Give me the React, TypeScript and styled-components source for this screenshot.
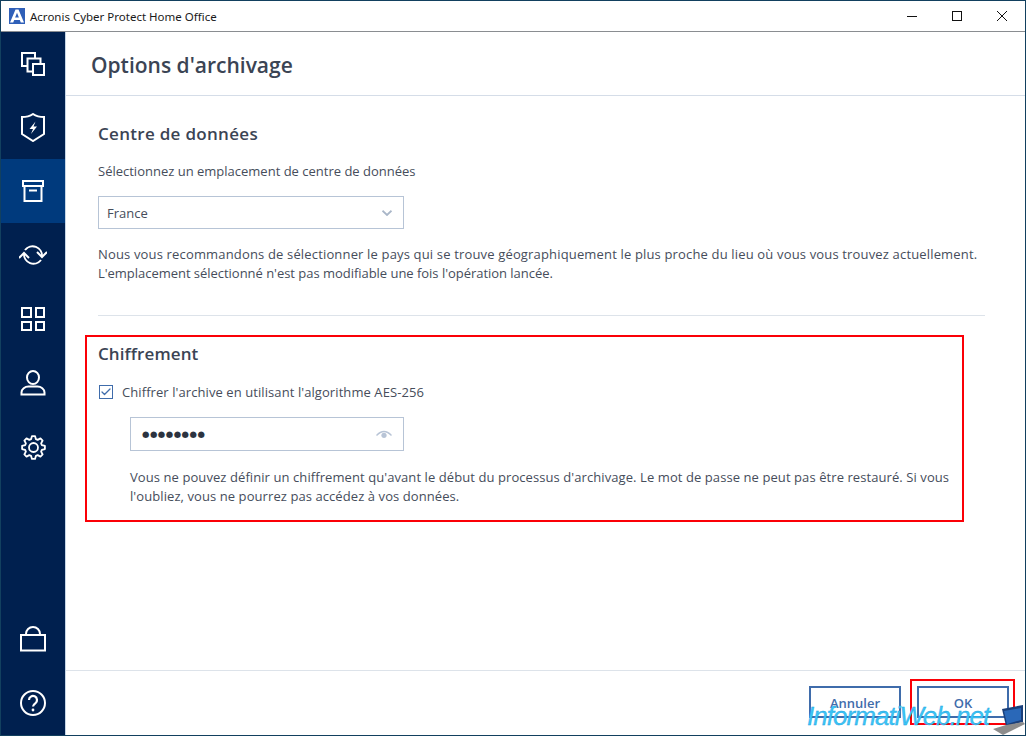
import React from 'react'
import styled, { createGlobalStyle } from 'styled-components'
import { Check } from 'lucide-react'

const GlobalStyle = createGlobalStyle`
  html, body {
    margin: 0;
    padding: 0;
    background: #fff;
  }
  * {
    box-sizing: border-box;
  }
`

const Window = styled.div`
  position: relative;
  width: 1026px;
  height: 736px;
  display: flex;
  flex-direction: column;
  border: 1px solid #12405f;
  background: #fff;
  font-family: 'Open Sans', 'Noto Sans', sans-serif;
  color: #3b4454;
  overflow: hidden;
`

const TitleBar = styled.div`
  height: 31px;
  flex: none;
  display: flex;
  align-items: center;
  border-bottom: 1px solid #8a8d91;
  padding-left: 8px;
`

const AppLogo = styled.svg`
  width: 16px;
  height: 16px;
  flex: none;
`

const TitleText = styled.div`
  margin-left: 5px;
  font-family: 'Noto Sans', 'Open Sans', sans-serif;
  font-size: 11.5px;
  color: #1a1a1a;
  flex: 1;
`

const WinButtons = styled.div`
  display: flex;
  align-items: center;
  margin-right: 1px;
`

const WinButton = styled.div`
  width: 45px;
  height: 30px;
  display: flex;
  align-items: center;
  justify-content: center;
`

const Main = styled.div`
  flex: 1;
  display: flex;
  min-height: 0;
`

const Sidebar = styled.nav`
  width: 65px;
  flex: none;
  background: #00204f;
  display: flex;
  flex-direction: column;
  border-right: 1px solid #c6d6e6;
`

const NavItem = styled.div<{ $active?: boolean }>`
  height: 64px;
  flex: none;
  display: flex;
  align-items: center;
  justify-content: center;
  background: ${(p) => (p.$active ? '#003a7d' : 'transparent')};
  color: #fff;

  &:nth-child(2) {
    height: 63px;
  }
`

const NavSpacer = styled.div`
  flex: 1;
`

const Content = styled.div`
  flex: 1;
  display: flex;
  flex-direction: column;
  min-width: 0;
`

const Header = styled.header`
  height: 64px;
  flex: none;
  display: flex;
  align-items: center;
  padding-left: 25px;
  border-bottom: 1px solid #d5dde8;
`

const PageTitle = styled.h1`
  margin: 2px 0 0;
  font-size: 21px;
  font-weight: 600;
  color: #3b4454;
`

const Body = styled.div`
  flex: 1;
  padding: 26px 40px 0 32px;
`

const SectionTitle = styled.h2`
  margin: 0;
  font-size: 17px;
  line-height: 24px;
  font-weight: 600;
  letter-spacing: 0.3px;
  color: #3b4454;
`

const Text = styled.p<{ $tracking?: number }>`
  margin: 0;
  font-size: 13px;
  line-height: 19px;
  letter-spacing: ${(p) => p.$tracking ?? 0.16}px;
  color: #464d5b;
`

const SelectLabel = styled(Text)`
  margin-top: 16px;
`

const Field = styled.div<{ $short?: boolean }>`
  width: ${(p) => (p.$short ? '274px' : '306px')};
  height: ${(p) => (p.$short ? '34px' : '33px')};
  display: flex;
  align-items: center;
  justify-content: space-between;
  border: 1px solid #b7c4d6;
  padding: 0 11px 0 8px;
  font-size: 13px;
  color: #464d5b;
`

const SelectField = styled(Field)`
  margin-top: 15px;
`

const Recommend = styled(Text)`
  margin-top: 16px;
`

const Divider = styled.hr`
  margin: 32px 0 0;
  border: 0;
  border-top: 1px solid #dde3ea;
`

const EncryptTitle = styled(SectionTitle)`
  margin-top: 26px;
  letter-spacing: 0.1px;
`

const CheckRow = styled.label`
  display: flex;
  align-items: center;
  margin-top: 16px;
  padding-left: 1px;
  height: 19px;
  font-size: 13px;
  letter-spacing: 0.08px;
  color: #464d5b;
`

const CheckBox = styled.span`
  width: 14px;
  height: 14px;
  flex: none;
  margin-right: 9px;
  border: 1px solid #3f6cab;
  display: flex;
  align-items: center;
  justify-content: center;
  color: #3f6cab;
`

const Indented = styled.div`
  padding-left: 32px;
`

const PasswordField = styled(Field)`
  margin-top: 16px;
  padding-left: 11px;
`

const Dots = styled.span`
  font-family: 'DejaVu Sans', sans-serif;
  font-size: 8.5px;
  letter-spacing: 0.5px;
  color: #2c3340;
`

const EncryptNote = styled(Text)`
  margin-top: 17px;
  width: 826px;
`

const Footer = styled.footer`
  height: 65px;
  flex: none;
  display: flex;
  justify-content: flex-end;
  gap: 16px;
  padding: 15px 16px 0 0;
  border-top: 1px solid #dde3ea;
`

const ActionButton = styled.button`
  width: 92px;
  height: 32px;
  padding: 2px 0 0;
  border: 2px solid #3f6cab;
  background: #fff;
  font-family: 'Open Sans', sans-serif;
  font-size: 13px;
  font-weight: 600;
  color: #3f6cab;
`

const Annotation = styled.div<{ $x: number; $y: number; $w: number; $h: number }>`
  position: absolute;
  left: ${(p) => p.$x}px;
  top: ${(p) => p.$y}px;
  width: ${(p) => p.$w}px;
  height: ${(p) => p.$h}px;
  border: 2px solid #fb0007;
  pointer-events: none;
`

const Watermark = styled.div`
  position: absolute;
  left: 806px;
  top: 700px;
  font-family: 'Liberation Sans', Arial, sans-serif;
  font-size: 26px;
  line-height: 30px;
  font-style: italic;
  color: #3cc4f5;
  -webkit-text-stroke: 0.3px #1c9fe0;
  letter-spacing: -0.95px;
  white-space: nowrap;
`

const Laptop = styled.svg`
  position: absolute;
  left: 992px;
  top: 704px;
  width: 32px;
  height: 30px;
`

const SecondLine = styled.span`
  letter-spacing: -0.03px;
`

const ICON = { fill: 'none', stroke: 'currentColor', strokeWidth: 2 }

// 8 rounded teeth, same outline as the settings icon of the sidebar
const gearPath = () => {
  const points: string[] = []
  const teeth = 8
  for (let i = 0; i < teeth; i++) {
    const step = (Math.PI * 2) / teeth
    const base = i * step - Math.PI / 2
    const at = (r: number, a: number) =>
      `${(12.5 + r * Math.cos(a)).toFixed(2)} ${(12.5 + r * Math.sin(a)).toFixed(2)}`
    points.push(at(8.7, base - step * 0.36))
    points.push(at(11.5, base - step * 0.17))
    points.push(at(11.5, base + step * 0.17))
    points.push(at(8.7, base + step * 0.36))
  }
  return `M${points.join('L')}Z`
}

const Icons = {
  copies: (
    <svg width='24' height='24' viewBox='0 0 24 24' {...ICON}>
      <rect x='1' y='1' width='13' height='13' />
      <rect x='6.500' y='6.500' width='13' height='13' fill='#00204f' />
      <rect x='12' y='12' width='11' height='11' fill='#00204f' />
    </svg>
  ),
  shield: (
    <svg width='24' height='29' viewBox='0 0 24 29' {...ICON}>
      <path d='M1 4c4 0 8-1 11-3 3 2 7 3 11 3v17l-11 7-11-7z' />
      <path d='M14.500 8.500L8.500 16H12l-2 5 6-7.500h-3.500z' fill='currentColor' stroke='none' />
    </svg>
  ),
  archive: (
    <svg width='22' height='22' viewBox='0 0 22 22' {...ICON}>
      <rect x='1' y='1' width='20' height='5' />
      <path d='M2.500 6V21H19.500V6' />
      <path d='M7 10.500h8' />
    </svg>
  ),
  sync: (
    <svg width='28' height='22' viewBox='0 0 28 22' {...ICON}>
      <path d='M6 6A9.500 9.500 0 0 1 23 12.500' />
      <path d='M22 16A9.500 9.500 0 0 1 5 9.500' />
      <path d='M18 8l5 5 5-5' />
      <path d='M0 14l5-5 5 5' />
    </svg>
  ),
  apps: (
    <svg width='24' height='24' viewBox='0 0 24 24' {...ICON}>
      <rect x='1' y='1' width='9' height='9' />
      <rect x='15' y='1' width='8' height='9' />
      <rect x='1' y='15' width='9' height='8' />
      <rect x='15' y='15' width='8' height='8' />
    </svg>
  ),
  user: (
    <svg width='26' height='26' viewBox='0 0 26 26' {...ICON}>
      <ellipse cx='13' cy='7.500' rx='6' ry='6.500' />
      <path d='M1.500 24.500v-2c0-3.500 3.500-6 7-6h9c3.500 0 7 2.500 7 6v2z' />
    </svg>
  ),
  gear: (
    <svg width='25' height='25' viewBox='0 0 25 25' fill='none' stroke='currentColor' strokeWidth='1.800' strokeLinejoin='round'>
      <path d={gearPath()} />
      <circle cx='12.500' cy='12.500' r='4.500' />
    </svg>
  ),
  bag: (
    <svg width='26' height='26' viewBox='0 0 26 26' {...ICON}>
      <rect x='1' y='9' width='24' height='15.500' />
      <path d='M6 9V8a7 7 0 0 1 14 0v1' />
    </svg>
  ),
  help: (
    <svg width='28' height='28' viewBox='0 0 28 28' {...ICON}>
      <circle cx='14' cy='14' r='12' />
      <path d='M10 11a4 4 0 1 1 6.500 3.100c-1.500 1.100-2.500 1.900-2.500 3.400' strokeWidth='2.200' />
      <circle cx='14' cy='21' r='1.400' fill='currentColor' stroke='none' />
    </svg>
  ),
}

const App: React.FC = () => {
  return (
    <Window>
      <GlobalStyle />
      <TitleBar>
        <AppLogo viewBox='0 0 16 16'>
          <rect width='16' height='16' fill='#2f5fb8' />
          <path d='M6.500 1.500h3L15 14.500h-3.200l-1-2.600H5.200l-1 2.600H1z M6.100 9.500h3.800L8 4.700z' fill='#fff' fillRule='evenodd' />
        </AppLogo>
        <TitleText>Acronis Cyber Protect Home Office</TitleText>
        <WinButtons>
          <WinButton>
            <svg width='10' height='10' viewBox='0 0 10 10' stroke='#111' strokeWidth='1'>
              <path d='M0 5.500h10' />
            </svg>
          </WinButton>
          <WinButton>
            <svg width='10' height='10' viewBox='0 0 10 10' fill='none' stroke='#111' strokeWidth='1'>
              <rect x='.5' y='.5' width='9' height='9' />
            </svg>
          </WinButton>
          <WinButton>
            <svg width='10' height='10' viewBox='0 0 10 10' stroke='#111' strokeWidth='1'>
              <path d='M0 0l10 10M10 0L0 10' />
            </svg>
          </WinButton>
        </WinButtons>
      </TitleBar>
      <Main>
        <Sidebar>
          <NavItem>{Icons.copies}</NavItem>
          <NavItem>{Icons.shield}</NavItem>
          <NavItem $active>{Icons.archive}</NavItem>
          <NavItem>{Icons.sync}</NavItem>
          <NavItem>{Icons.apps}</NavItem>
          <NavItem>{Icons.user}</NavItem>
          <NavItem>{Icons.gear}</NavItem>
          <NavSpacer />
          <NavItem>{Icons.bag}</NavItem>
          <NavItem>{Icons.help}</NavItem>
        </Sidebar>
        <Content>
          <Header>
            <PageTitle>Options d'archivage</PageTitle>
          </Header>
          <Body>
            <SectionTitle>Centre de données</SectionTitle>
            <SelectLabel $tracking={0}>Sélectionnez un emplacement de centre de données</SelectLabel>
            <SelectField>
              France
              <svg width='10' height='6' viewBox='0 0 10 6' fill='none' stroke='#a9b6c8' strokeWidth='1.800'>
                <path d='M.5.700L5 5l4.500-4.300' />
              </svg>
            </SelectField>
            <Recommend>
              Nous vous recommandons de sélectionner le pays qui se trouve géographiquement le plus proche du lieu où vous vous trouvez actuellement.
              <br />
              <SecondLine>L'emplacement sélectionné n'est pas modifiable une fois l'opération lancée.</SecondLine>
            </Recommend>
            <Divider />
            <EncryptTitle>Chiffrement</EncryptTitle>
            <CheckRow>
              <CheckBox><Check size={12} strokeWidth={2.500} /></CheckBox>
              Chiffrer l'archive en utilisant l'algorithme AES-256
            </CheckRow>
            <Indented>
              <PasswordField $short>
                <Dots>●●●●●●●●</Dots>
                <svg width='16' height='8' viewBox='0 0 16 8' fill='none' stroke='#b8c4d6' strokeWidth='1.300'>
                  <path d='M.5 5.500Q8-2.500 15.500 5.500' />
                  <circle cx='8' cy='5.300' r='2.600' fill='#b8c4d6' stroke='none' />
                </svg>
              </PasswordField>
              <EncryptNote $tracking={0.08}>
                Vous ne pouvez définir un chiffrement qu'avant le début du processus d'archivage. Le mot de passe ne peut pas être restauré. Si vous l'oubliez, vous ne pourrez pas accédez à vos données.
              </EncryptNote>
            </Indented>
          </Body>
          <Footer>
            <ActionButton>Annuler</ActionButton>
            <ActionButton>OK</ActionButton>
          </Footer>
        </Content>
      </Main>
      <Annotation $x={84} $y={334} $w={879} $h={187} />
      <Annotation $x={909} $y={678} $w={105} $h={46} />
      <Watermark>InformatiWeb.net</Watermark>
      <Laptop viewBox='0 0 32 30'>
        <path d='M9 4L30 0v17L13 21z' fill='#1a3f7a' />
        <path d='M11 6l17-3v12L14 19z' fill='#2a68b8' />
        <path d='M0 24l13-4 17-3 2 2-22 11z' fill='#8c8c8c' />
      </Laptop>
    </Window>
  )
}

export default App
